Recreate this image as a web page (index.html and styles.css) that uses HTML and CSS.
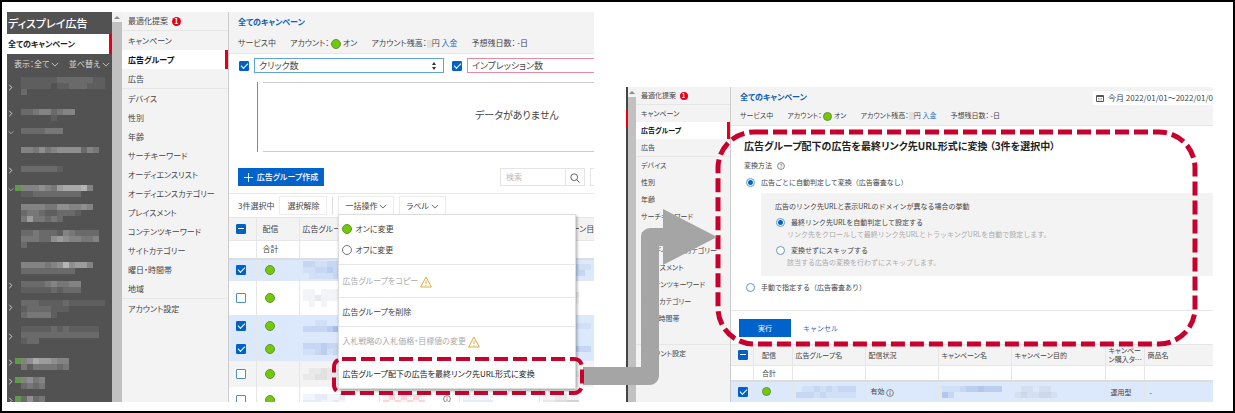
FILE: index.html
```html
<!DOCTYPE html>
<html lang="ja">
<head>
<meta charset="utf-8">
<title>ディスプレイ広告</title>
<link rel="stylesheet" href="styles.css">
</head>
<body>
<svg class="defs" aria-hidden="true">
  <symbol id="down" viewBox="0 0 10 6"><path d="M1 1l4 4 4-4" fill="none" stroke="currentColor"/></symbol>
  <symbol id="right" viewBox="0 0 6 10"><path d="M1 2l3 3-3 3" fill="none" stroke="currentColor"/></symbol>
  <symbol id="up" viewBox="0 0 6 4"><path d="M0 4l3-3 3 3z" fill="#8a8a8a"/></symbol>
  <symbol id="warn" viewBox="0 0 12 12"><path d="M6 1L11.3 11H.7z" fill="none" stroke="#e0a93c" stroke-linejoin="round"/><path d="M6 4.5v3.4M6 8.8v1.1" stroke="#e0a93c" fill="none"/></symbol>
  <symbol id="info" viewBox="0 0 8 8"><circle cx="4" cy="4" r="3.4" fill="none" stroke="#666" stroke-width=".8"/><path d="M4 3.5v2.4M4 2v.8" stroke="#666" stroke-width=".9"/></symbol>
</svg>

<div class="frame">
  <section class="panel">
    <aside class="campaigns">
      <h1>ディスプレイ広告</h1>
      <a class="all" href="#">全てのキャンペーン</a>
      <div class="filters"><button>表示：全て <svg class="chev"><use href="#down"/></svg></button><button>並べ替え <svg class="chev"><use href="#down"/></svg></button></div>
      <ul class="tree">
        <li class="l3"><svg class="tw"><use href="#right"/></svg><i data-px=" 11111122222211/ 11111011222111/ 2"></i></li>
        <li class="l1"><svg class="tw"><use href="#right"/></svg><i data-px=" 223442344/      1"></i></li>
        <li class="l1"><svg class="tw"><use href="#down"/></svg><i data-px=" 2222333"></i></li>
        <li class="l1"><i data-px=" 4435345555243"></i></li>
        <li class="l1"><svg class="tw"><use href="#right"/></svg><i data-px=" 2222221"></i></li>
        <li class="l1"><svg class="tw"><use href="#down"/></svg><i data-px="g444543677784/ 1122222222"></i></li>
        <li class="l2"><i data-px=" 444433554454/ 2332112221/ 3633232"></i></li>
        <li class="l3"><i data-px=" 2232221432222/ 3332256544334/ 2"></i></li>
        <li class="l1"><i data-px=" 444434585664/ 222222222"></i></li>
        <li class="l1"><svg class="tw"><use href="#right"/></svg><i data-px=" 2222343344/ 1111121222"></i></li>
        <li class="l2"><svg class="tw"><use href="#right"/></svg><i data-px=" 22211112111111/ 12222111/ 233331"></i></li>
        <li class="l3"><svg class="tw"><use href="#right"/></svg><i data-px=" 1111121211111/ 2222222222222/ 122"></i></li>
        <li class="l1"><svg class="tw"><use href="#right"/></svg><i data-px="g45766544/ 31333323"></i></li>
        <li class="l1"><svg class="tw"><use href="#right"/></svg><i data-px="g4534/ 2323"></i></li>
        <li class="l1"><svg class="tw"><use href="#right"/></svg><i data-px="g2523"></i></li>
      </ul>
    </aside>
    <div class="scroll"><svg><use href="#up"/></svg></div>
    <nav class="nav">
      <a class="end" href="#">最適化提案 <b class="badge">1</b></a>
      <a href="#">キャンペーン</a>
      <a class="on" href="#">広告グループ</a>
      <a href="#">広告</a>
      <a class="start" href="#">デバイス</a>
      <a href="#">性別</a>
      <a href="#">年齢</a>
      <a href="#">サーチキーワード</a>
      <a href="#">オーディエンスリスト</a>
      <a href="#">オーディエンスカテゴリー</a>
      <a href="#">プレイスメント</a>
      <a href="#">コンテンツキーワード</a>
      <a href="#">サイトカテゴリー</a>
      <a href="#">曜日・時間帯</a>
      <a href="#">地域</a>
      <a class="start" href="#">アカウント設定</a>
    </nav>
    <main class="main">
      <header class="head">
        <a class="title" href="#">全てのキャンペーン</a>
        <p class="status"><span>サービス中</span><span>アカウント： <i class="dot"></i> オン</span><span>アカウント残高：<i class="veil"></i>円 <a href="#">入金</a></span><span>予想残日数： -日</span></p>
      </header>
      <div class="metrics">
        <input class="check" type="checkbox" checked aria-label="クリック数を表示">
        <div class="pick blue"><select aria-label="指標1"><option>クリック数</option></select><svg viewBox="0 0 6 10"><path d="M1 4l2-3 2 3zM1 6l2 3 2-3z" fill="#333"/></svg></div>
        <input class="check" type="checkbox" checked aria-label="インプレッション数を表示">
        <div class="pick pink"><select aria-label="指標2"><option>インプレッション数</option></select></div>
      </div>
      <div class="chart"><p>データがありません</p></div>
      <div class="actions">
        <button class="primary"><svg viewBox="0 0 10 10"><path d="M5 0v10M0 5h10" stroke="#fff"/></svg>広告グループ作成</button>
        <div class="search"><input type="search" placeholder="検索" aria-label="検索"><button aria-label="検索する"><svg viewBox="0 0 10 10"><circle cx="4.2" cy="4.2" r="3.4" fill="none" stroke="#555" stroke-width=".9"/><path d="M6.7 6.7L9.5 9.5" stroke="#555"/></svg></button></div>
        <span class="more"></span>
      </div>
      <div class="tools">
        <span>3件選択中</span>
        <button class="tool clear">選択解除</button>
        <span class="sep"></span>
        <div class="drop">
          <button class="tool">一括操作 <svg class="chev"><use href="#down"/></svg></button>
          <div class="menu">
            <div class="group pair"><button><i class="dot"></i>オンに変更</button><button><i class="dot off"></i>オフに変更</button></div>
            <div class="group tall"><button disabled>広告グループをコピー <svg class="warn"><use href="#warn"/></svg></button></div>
            <div class="group"><button>広告グループを削除</button></div>
            <div class="group last"><button disabled>入札戦略の入札価格・目標値の変更 <svg class="warn"><use href="#warn"/></svg></button>
              <button class="target">広告グループ配下の広告を最終リンク先URL形式に変換</button></div>
            <svg class="mark-menu"><rect x="3" y="3" width="248" height="34" rx="8"/></svg>
          </div>
        </div>
        <button class="tool">ラベル <svg class="chev"><use href="#down"/></svg></button>
      </div>
      <table class="grid">
        <colgroup><col class="a1"><col class="a2"><col class="a3"><col class="a3"><col class="a3"><col></colgroup>
        <thead><tr><th><input class="check mixed" type="checkbox" aria-label="全て選択"></th><th>配信</th><th>広告グループ名</th><th>配信状況</th><th>キャンペーン名</th><th>キャンペーン目的</th></tr></thead>
        <tbody>
          <tr class="sum"><td></td><td>合計</td><td></td><td></td><td></td><td></td></tr>
          <tr class="sel r1"><td><input class="check" type="checkbox" checked aria-label="行1"></td><td><i class="dot"></i></td><td><i data-ink="#4a6fc4" data-px="22112233/11223244/0111122"></i></td><td></td><td></td><td><i data-ink="#4a6fc4" data-px="11112211/0001122"></i></td></tr>
          <tr class="r2"><td><input class="check" type="checkbox" aria-label="行2"></td><td><i class="dot"></i></td><td><i data-ink="#5060a0" data-px="110111/1121111/0101"></i></td><td></td><td></td><td><i data-ink="#777" data-px="112222/111111"></i></td></tr>
          <tr class="sel r3"><td><input class="check" type="checkbox" checked aria-label="行3"></td><td><i class="dot"></i></td><td><i data-ink="#4a6fc4" data-px="0011001/22223555"></i></td><td></td><td></td><td><i data-ink="#4a6fc4" data-px="11112111"></i></td></tr>
          <tr class="sel r3"><td><input class="check" type="checkbox" checked aria-label="行4"></td><td><i class="dot"></i></td><td><i data-ink="#4a6fc4" data-px="22232222/1123122"></i></td><td></td><td></td><td><i data-ink="#4a6fc4" data-px="11223322"></i></td></tr>
          <tr class="alt r4"><td><input class="check" type="checkbox" aria-label="行5"></td><td><i class="dot"></i></td><td><i data-ink="#777" data-px="01121122/1122111"></i></td><td></td><td></td><td><i data-ink="#777" data-px="111221"></i></td></tr>
          <tr class="r5"><td><input class="check" type="checkbox" aria-label="行6"></td><td><i class="dot"></i></td><td><i data-ink="#4a6fc4" data-px="1122112/2221121"></i></td><td class="flag"><i data-ink="#e04050" data-px="1313131/3131313"></i><svg class="info"><use href="#info"/></svg></td><td><i data-ink="#4a6fc4" data-px="11111/22222"></i></td><td><i data-ink="#666" data-px="112211/223344"></i></td></tr>
        </tbody>
      </table>
    </main>
  </section>

  <section class="detail">
    <div class="panel small">
      <div class="edge"></div>
      <div class="scroll"><svg><use href="#up"/></svg></div>
      <nav class="nav">
        <a class="end" href="#">最適化提案 <b class="badge">1</b></a>
        <a href="#">キャンペーン</a>
        <a class="on" href="#">広告グループ</a>
        <a href="#">広告</a>
        <a class="start" href="#">デバイス</a>
        <a href="#">性別</a>
        <a href="#">年齢</a>
        <a href="#">サーチキーワード</a>
        <a href="#">オーディエンスリスト</a>
        <a href="#">オーディエンスカテゴリー</a>
        <a href="#">プレイスメント</a>
        <a href="#">コンテンツキーワード</a>
        <a href="#">サイトカテゴリー</a>
        <a href="#">曜日・時間帯</a>
        <a href="#">地域</a>
        <a class="start" href="#">アカウント設定</a>
      </nav>
      <main class="main">
        <header class="head">
          <div class="headrow"><a class="title" href="#">全てのキャンペーン</a>
            <button class="date"><svg viewBox="0 0 8 8"><path d="M.5 1.5h7v6h-7zM.5 2.5h7" fill="none" stroke="#555"/><path d="M2 4.5h1.5M4.5 4.5H6M2 6h1.5M4.5 6H6" stroke="#777" stroke-width=".7"/></svg><span>今月 2022/01/01～2022/01/0</span></button></div>
          <p class="status"><span>サービス中</span><span>アカウント： <i class="dot"></i> オン</span><span>アカウント残高：<i class="veil"></i>円 <a href="#">入金</a></span><span>予想残日数： -日</span></p>
        </header>
        <form class="convert">
          <h2>広告グループ配下の広告を最終リンク先URL形式に変換 （3件を選択中）</h2>
          <p class="method">変換方法 <svg viewBox="0 0 8 8"><circle cx="4" cy="4" r="3.4" fill="none" stroke="#666" stroke-width=".8"/><path d="M3 3.2c0-1.3 2-1.3 2 0 0 .8-1 .7-1 1.5M4 5.4v.8" fill="none" stroke="#666" stroke-width=".7"/></svg></p>
          <label class="opt"><input type="radio" name="method" checked>広告ごとに自動判定して変換（広告審査なし）</label>
          <div class="box">
            <p>広告のリンク先URLと表示URLのドメインが異なる場合の挙動</p>
            <label class="opt"><input type="radio" name="domain" checked>最終リンク先URLを自動判定して設定する</label>
            <p class="note">リンク先をクロールして最終リンク先URLとトラッキングURLを自動で設定します。</p>
            <label class="opt"><input type="radio" name="domain">変換せずにスキップする</label>
            <p class="note">該当する広告の変換を行わずにスキップします。</p>
          </div>
          <label class="opt manual"><input type="radio" name="method">手動で指定する（広告審査あり）</label>
          <div class="submit"><button type="button" class="primary">実行</button><a href="#">キャンセル</a></div>
        </form>
        <table class="grid">
          <colgroup><col class="b1"><col class="b2"><col class="b3"><col class="b3"><col class="b3"><col class="b4"><col class="b2"><col></colgroup>
          <thead><tr><th><input class="check mixed" type="checkbox" aria-label="全て選択"></th><th>配信</th><th>広告グループ名</th><th>配信状況</th><th>キャンペーン名</th><th>キャンペーン目的</th><th class="wrap">キャンペー<br>ン購入タ…</th><th>商品名</th></tr></thead>
          <tbody>
            <tr class="sum"><td></td><td>合計</td><td></td><td></td><td></td><td></td><td></td><td></td></tr>
            <tr class="sel r1"><td><input class="check" type="checkbox" checked aria-label="行1"></td><td><i class="dot"></i></td><td><i data-ink="#4a6fc4" data-px="0112121222/2221211111"></i></td><td class="in">有効 <svg class="info"><use href="#info"/></svg></td><td><i data-ink="#4a6fc4" data-px="1112334333/42"></i></td><td><i data-ink="#777" data-px="0110110/1211221"></i></td><td class="in">運用型</td><td class="in">-</td></tr>
          </tbody>
        </table>
      </main>
    </div>
    <svg class="mark-form"><rect x="0" y="0" width="100%" height="100%" rx="36"/></svg>
    <svg class="arrow" viewBox="0 0 138 182"><path d="M3 171H70V32H86" fill="none" stroke="#a5a5a5" stroke-width="18" stroke-linejoin="round"/><path d="M83 4L137 32 83 60z" fill="#a5a5a5"/></svg>
  </section>
</div>
<script src="pixels.js"></script>
</body>
</html>
```

FILE: styles.css
```css
* { box-sizing: border-box; }

body {
  margin: 0;
  background: #fff;
  color: #444;
  font: 8px/12px "Noto Sans CJK JP", sans-serif;
  font-feature-settings: "palt";
}

p, h1, h2, ul { margin: 0; padding: 0; }
a { color: #1a6fc0; text-decoration: none; }
i { font-style: normal; }
svg { flex: none; }
button, input, select { margin: 0; padding: 0; border: 0; border-radius: 0; background: none; color: inherit; font: inherit; font-feature-settings: inherit; }
.defs { position: absolute; width: 0; height: 0; }

.frame { display: flex; gap: 32px; height: 100vh; padding: 10px 20px 9px 5px; border: 2px solid #000; overflow: hidden; }
.panel { flex: 1 1 0; min-width: 0; display: flex; overflow: hidden; }
.detail { flex: 1 1 0; min-width: 0; display: flex; margin-top: 75px; position: relative; }

/* campaign tree */
.campaigns { flex: none; width: 105px; background: #525252; color: #ddd; overflow: hidden; }
.campaigns h1 { padding: 0 1px; color: #fff; font-size: 11px; line-height: 22px; font-weight: 500; }
.all { display: block; padding-left: 1px; border-right: 3px solid #e2001a; background: #fff; color: #222; font-weight: 700; line-height: 20px; }
.filters { display: flex; justify-content: space-between; padding: 4px 2px 4px 7px; line-height: 12px; }
.filters button { line-height: 12px; }
.chev { width: 8px; height: 5px; vertical-align: middle; }
.tree { list-style: none; padding-top: 3px; }
.tree li { display: grid; grid-template-columns: 8px 1fr; align-items: center; padding-bottom: 12px; }
.tree i { grid-column: 2; align-self: start; height: 6px; }
.tw { width: 6px; height: 9px; margin-left: 1px; grid-row: 1; }
.l1 { height: 19px; }
.l2 { height: 26px; }
.l3 { height: 32px; }
i[data-px] { display: block; }
i[data-px] svg { display: block; }

.scroll { flex: none; width: 10px; padding: 3px 2px; background: linear-gradient(#f1f1f1 10px, #c1c1c1 10px); }
.scroll svg { display: block; width: 6px; height: 4px; }

/* report navigation */
.nav { flex: none; width: 107px; background: #f4f3f4; border-right: 1px solid #ccc; }
.nav a { display: block; padding-left: 6px; color: #444; line-height: 19px; white-space: nowrap; }
.nav .end { height: 19px; line-height: 18px; border-bottom: 1px solid #e6e6e6; }
.nav .start { border-top: 1px solid #e6e6e6; }
.nav .on { background: #fff; border-right: 3px solid #e2001a; color: #111; font-weight: 700; }
.badge { display: inline-block; width: 9px; height: 9px; margin-left: 2px; border-radius: 50%; background: #e2001a; color: #fff; font-size: 7px; line-height: 9px; text-align: center; }

.main { flex: 1; min-width: 0; overflow: hidden; background: #fff; }
.head { height: 42px; padding: 4px 0 0 9px; background: #f4f3f4; border-bottom: 1px solid #e6e6e6; }
.title { display: block; line-height: 12px; font-weight: 700; color: #0a5cb8; }
.status { display: flex; gap: 14px; padding-top: 9px; line-height: 12px; white-space: nowrap; }
.dot { display: inline-block; width: 10px; height: 10px; border: 1px solid #66923c; border-radius: 50%; background: #72c906; vertical-align: middle; }
.dot.off { background: #fff; border-color: #777; }
.veil { display: inline-block; width: 5px; height: 8px; background: #e2e2e2; vertical-align: middle; }

.check { flex: none; display: block; appearance: none; width: 10px; height: 10px; border: 1px solid #4d8fc4; border-radius: 1px; background: #fff; position: relative; }
.check:checked, .mixed { background: #0062c4; border-color: #0062c4; }
.check:checked::after { content: ""; position: absolute; left: 1px; top: 1px; width: 6px; height: 3px; border: solid #fff; border-width: 0 0 1px 1px; transform: rotate(-45deg); }
.mixed::after { content: ""; position: absolute; left: 1px; top: 3px; width: 6px; height: 1px; background: #fff; }

.metrics { display: flex; align-items: center; gap: 5px; padding: 4px 0 0 10px; }
.pick { height: 15px; position: relative; border: 1px solid #5fa6d6; }
.blue { flex: none; width: 190px; margin-right: 3px; }
.pink { border-color: #e58aa0; border-right: 0; flex: 1 1 0; }
.pick select { display: block; width: 100%; height: 13px; padding-left: 4px; appearance: none; font-size: 9px; line-height: 13px; }
.pick svg { position: absolute; right: 6px; top: 2px; width: 6px; height: 10px; }

.chart { display: flex; height: 70px; margin: 9px 0 0 28px; padding-left: 5px; border-left: 1px solid #5d97b8; }
.chart p { flex: 1; padding: 24px 0 0 212px; border: solid #ccc; border-width: 1px 0; font-size: 10px; line-height: 16px; }

.actions { display: flex; gap: 5px; height: 42px; padding: 16px 0 7px 9px; border-bottom: 1px solid #e8e8e8; }
.primary { display: flex; align-items: center; justify-content: center; gap: 4px; background: #0062cb; color: #fff; }
.actions .primary { width: 86px; font-size: 8px; font-weight: 500; }
.primary svg { width: 9px; height: 9px; }
.search { display: flex; width: 85px; margin-left: auto; border: 1px solid #e4e4e4; }
.search input { flex: 1; min-width: 0; padding-left: 5px; }
.search input::placeholder { color: #bbb; }
.search button { width: 19px; border-left: 1px solid #e4e4e4; }
.search svg { width: 10px; height: 10px; vertical-align: middle; }
.more { width: 4px; border: 1px solid #e4e4e4; border-right: 0; }

.tools { display: flex; align-items: center; gap: 5px; height: 23px; padding-left: 9px; white-space: nowrap; }
.tool { height: 19px; padding: 0 6px; border: 1px solid #ececec; }
.clear { width: 48px; }
.sep { width: 1px; height: 18px; background: #ddd; }
.drop { position: relative; }

.menu { position: absolute; z-index: 2; left: 0; top: 18px; width: 238px; background: #fff; border: 1px solid #ddd; box-shadow: 1px 2px 3px rgba(0, 0, 0, .35); }
.group { padding: 7px 3px; border-bottom: 1px solid #e6e6e6; }
.group button { display: block; line-height: 14px; }
.pair { display: grid; gap: 7px; justify-items: start; }
.group .dot { margin: 0 3px 2px 0; }
.tall { padding: 9px 3px; }
.last { border: 0; }
.menu button:disabled { color: #aaa; }
.menu .target { margin-top: 19px; color: #222; }
.warn { width: 12px; height: 12px; vertical-align: middle; }
.mark-menu, .mark-form { position: absolute; fill: none; stroke: #c8002d; stroke-width: 5px; stroke-dasharray: 14 5; overflow: visible; pointer-events: none; }
.mark-menu { left: -8px; bottom: -8px; width: 254px; height: 40px; stroke-width: 4px; }

/* tables */
.grid { width: 100%; table-layout: fixed; border-collapse: collapse; white-space: nowrap; }
.grid th, .grid td { padding: 0 0 0 3px; border-left: 1px solid #e6e6e6; font-weight: 400; text-align: left; vertical-align: middle; overflow: hidden; line-height: 10px; }
.grid th:first-child, .grid td:first-child { border-left: 0; padding-left: 7px; }
.grid td:nth-child(2), .grid th:nth-child(2) { text-align: center; padding: 0 14px 0 0; }
.grid thead tr { height: 23px; background: #f4f3f4; border-top: 1px solid #e6e6e6; }
.grid .in { padding-left: 5px; }
.sum { height: 18px; border-top: 1px solid #e6e6e6; border-bottom: 2px solid #ddd; }
.a1 { width: 27px; }
.a2 { width: 43px; }
.a3 { width: 80px; }
.sel { background: #dce8fb; }
.alt { background: #f4f3f4; }
.r1 { height: 22px; }
.r2 { height: 34px; }
.r3 { height: 23px; }
.r4 { height: 26px; }
.r5 { height: 26px; }
.grid .dot { display: block; margin: 0 0 0 8px; }
.info { width: 8px; height: 8px; vertical-align: middle; }
.flag i { float: left; }
.flag .info { margin-left: 18px; }

/* conversion form panel */
.small { font-size: 7px; }
.small .edge { flex: none; width: 2px; background: linear-gradient(#444 22px, #e2001a 22px 40px, #444 40px); }
.small .scroll { width: 8px; padding: 3px 1px; }
.small .nav { width: 95px; }
.small .nav a { padding-left: 5px; line-height: 17px; }
.small .nav .end { height: 18px; line-height: 17px; }
.small .badge { width: 8px; height: 8px; font-size: 6px; line-height: 8px; }
.small .head { height: 39px; }
.headrow { display: flex; justify-content: space-between; }
.small .title { font-size: 8px; }
.small .dot { width: 9px; height: 9px; }
.small .status { padding-top: 4px; }
.date { display: flex; align-items: center; gap: 4px; height: 14px; padding-left: 3px; background: #fff; font-size: 8px; white-space: nowrap; }
.date svg { width: 8px; height: 8px; }

.convert { padding-top: 11px; line-height: 12px; white-space: nowrap; font-feature-settings: normal; }
.convert h2 { padding-left: 13px; color: #222; font-size: 10px; line-height: 18px; font-weight: 700; font-feature-settings: "palt"; }
.method { padding: 4px 0 0 13px; }
.method svg { width: 8px; height: 8px; margin-left: 3px; vertical-align: middle; }
.opt { display: flex; align-items: center; gap: 6px; padding: 5px 0 0 15px; }
.opt input { appearance: none; width: 9px; height: 9px; border: 1px solid #5a9acb; border-radius: 50%; background: #fff; }
.opt input:checked { background: radial-gradient(circle, #0062c4 2px, #fff 3px); }
.box { margin: 5px 0 0 30px; padding: 7px 0 8px 14px; background: #f4f3f4; }
.box .opt { padding: 4px 0 0 1px; }
.box .note { padding-left: 12px; color: #aaa; }
.manual { padding-bottom: 17px; border-bottom: 1px solid #e6e6e6; }
.submit { display: flex; align-items: center; gap: 12px; padding: 8px 0 7px 8px; }
.submit .primary { width: 52px; height: 18px; }
.small .grid thead tr { height: 21px; }
.small .sum { height: 15px; }
.small .grid td:nth-child(2), .small .grid th:nth-child(2) { padding-right: 7px; }
.small .wrap { line-height: 9px; }
.small .r1 { height: 21px; }
.b1 { width: 22px; }
.b2 { width: 39px; }
.b3 { width: 73px; }
.b4 { width: 94px; }

.mark-form { left: 92px; top: 45px; width: calc(100% - 110px); height: 212px; }
.arrow { position: absolute; left: -46px; top: 118px; width: 138px; height: 182px; }
```

FILE: pixels.js
```js
// Draws obscured names as a mosaic: each digit is the opacity of one cell.
document.querySelectorAll("i[data-px]").forEach(function (el) {
  var rows = el.dataset.px.split("/");
  var ink = el.dataset.ink || "#fff";
  var step = el.dataset.ink ? 14 : 14;
  var cols = Math.max.apply(null, rows.map(function (r) { return r.length; }));
  var cells = "";
  rows.forEach(function (row, y) {
    row.split("").forEach(function (c, x) {
      if (c === " " || c === "0") return;
      var fill = c === "g" ? "#5f9a4c" : ink;
      var alpha = c === "g" ? 1 : c / step;
      cells += '<rect x="' + x * 6 + '" y="' + y * 6 + '" width="6" height="6" fill="' + fill + '" opacity="' + alpha + '"/>';
    });
  });
  el.innerHTML = '<svg aria-hidden="true" width="' + cols * 6 + '" height="' + rows.length * 6 + '">' + cells + "</svg>";
});
```
